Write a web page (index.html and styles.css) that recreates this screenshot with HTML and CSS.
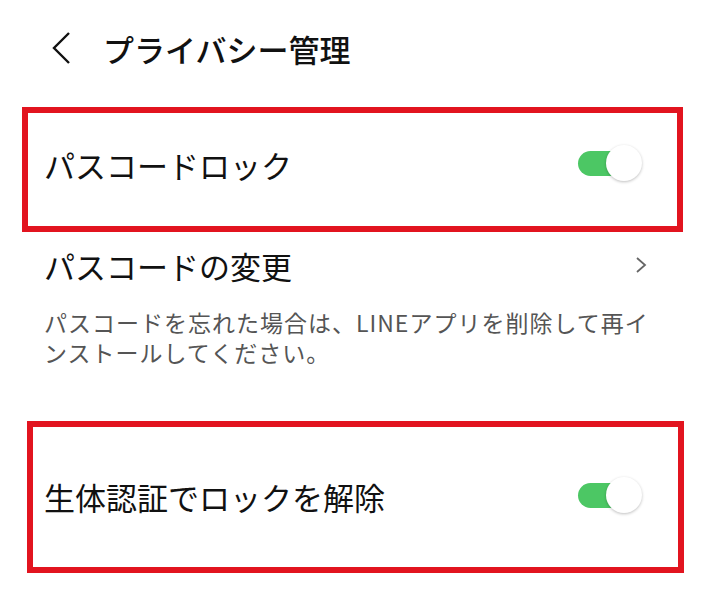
FILE: index.html
```html
<!DOCTYPE html>
<html lang="ja">
<head>
    <meta charset="UTF-8">
    <meta name="viewport" content="width=device-width, initial-scale=1.0">
    <title>プライバシー管理</title>
    <link rel="stylesheet" href="styles.css">
</head>
<body>
    <div id="header">
        <svg class="back-icon" width="20" height="32" viewBox="0 0 20 32">
            <polyline points="18,1 3,16 18,31" fill="none" stroke="#111" stroke-width="2.4"/>
        </svg>
        <h1 class="title">プライバシー管理</h1>
    </div>

    <div class="setting-row highlight" id="passcode-lock">
        <span class="label">パスコードロック</span>
        <div class="toggle">
            <div class="toggle-track"></div>
            <div class="toggle-knob"></div>
        </div>
    </div>

    <div class="setting-row link-row">
        <span class="label">パスコードの変更</span>
        <svg class="chevron" width="12" height="16" viewBox="0 0 12 16">
            <polyline points="2,1 10,8 2,15" fill="none" stroke="#666" stroke-width="1.8"/>
        </svg>
    </div>
    <p class="description">パスコードを忘れた場合は、LINEアプリを削除して再インストールしてください。</p>

    <div class="setting-row highlight" id="biometric-lock">
        <span class="label">生体認証でロックを解除</span>
        <div class="toggle">
            <div class="toggle-track"></div>
            <div class="toggle-knob"></div>
        </div>
    </div>
</body>
</html>
```

FILE: styles.css
```css
body {
    margin: 0;
    background-color: #fff;
    color: #111;
    font-family: "Noto Sans CJK JP", "Noto Sans", sans-serif;
}

#header {
    display: flex;
    align-items: center;
    height: 96px;
    padding-left: 51px;
}

.back-icon {
    display: block;
}

.title {
    margin: 0 0 0 32px;
    font-size: 31px;
    font-weight: 500;
    line-height: 1;
}

.setting-row {
    display: flex;
    align-items: center;
    justify-content: space-between;
    box-sizing: border-box;
}

.label {
    font-size: 31px;
    line-height: 1;
}

.highlight {
    border: 6px solid #e2141f;
}

#passcode-lock {
    height: 125px;
    margin: 11px 37px 0 22px;
    padding: 0 35px 11px 16px;
}

#biometric-lock {
    height: 152px;
    margin: 54px 36px 0 27px;
    padding: 0 36px 2px 11px;
}

.link-row {
    height: 60px;
    margin-top: 4px;
    padding: 0 73px 2px 44px;
}

.chevron {
    display: block;
}

.description {
    margin: 11px 0 0 44px;
    width: 620px;
    font-size: 23px;
    line-height: 30px;
    letter-spacing: 1px;
    color: #555;
}

.toggle {
    position: relative;
    width: 64px;
    height: 36px;
}

.toggle-track {
    position: absolute;
    left: 0;
    top: 5px;
    width: 58px;
    height: 25px;
    border-radius: 13px;
    background-color: #4cc764;
}

.toggle-knob {
    position: absolute;
    right: 0;
    top: -1px;
    width: 36px;
    height: 36px;
    border-radius: 50%;
    background-color: #fff;
    box-shadow: 0 1px 3px rgba(0,0,0,0.25);
}
```
